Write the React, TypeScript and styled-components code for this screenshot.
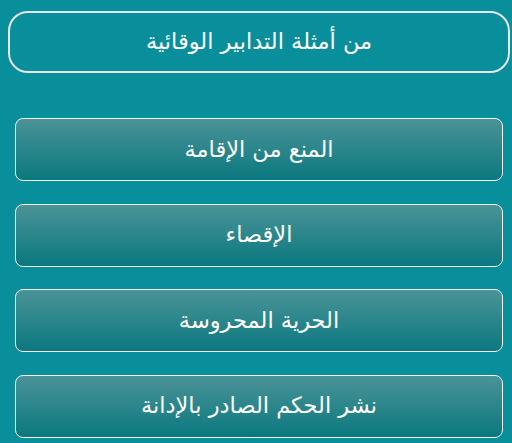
import React from "react";
import styled, { createGlobalStyle } from "styled-components";

const items = [
  "المنع من الإقامة",
  "الإقصاء",
  "الحرية المحروسة",
  "نشر الحكم الصادر بالإدانة",
];

const GlobalStyle = createGlobalStyle`
  html, body {
    margin: 0;
    padding: 0;
    background: #088f9b;
  }
  body {
    font-family: "DejaVu Sans", "Noto Sans", sans-serif;
  }
`;

export default function App() {
  return (
    <>
      <GlobalStyle />
      <Page dir="rtl">
        <Header>من أمثلة التدابير الوقائية</Header>
        <List>
          {items.map((label) => (
            <Option key={label}>{label}</Option>
          ))}
        </List>
      </Page>
    </>
  );
}

const Page = styled.div`
  width: 512px;
  height: 443px;
  box-sizing: border-box;
  padding: 11px 2px 0 8px;
  overflow: hidden;
  background: #088f9b;
`;

const Header = styled.div`
  height: 62px;
  box-sizing: border-box;
  display: flex;
  align-items: center;
  justify-content: center;
  padding-bottom: 2px;
  border: 2.5px solid #e6e6e6;
  border-radius: 20px;
  color: #ffffff;
  font-size: 22.5px;
`;

const List = styled.div`
  display: flex;
  flex-direction: column;
  gap: 22.6px;
  margin: 45px 7px 0 7px;
`;

const Option = styled.div`
  height: 63px;
  box-sizing: border-box;
  display: flex;
  align-items: center;
  justify-content: center;
  padding-bottom: 2px;
  border: 1.5px solid #f4f4f4;
  border-radius: 8px;
  background: linear-gradient(to bottom, #4a9397 0%, #2a868b 50%, #0a7880 100%);
  color: #ffffff;
  font-size: 22.5px;
`;
